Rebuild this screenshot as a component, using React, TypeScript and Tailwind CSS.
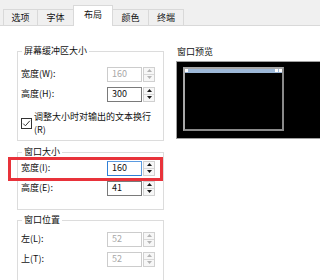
import clsx from "clsx";

const font = { fontFamily: '"Noto Sans CJK SC", "Noto Sans", sans-serif' };

function Spin({ disabled }: { disabled?: boolean }) {
  const c = disabled ? "#b4b4b4" : "#1a1a1a";
  return (
    <div className="ml-[1px] flex h-[15px] w-[12px] flex-col border border-[#d0d0d0] bg-[#f7f7f7]">
      <div className="flex flex-1 items-center justify-center border-b border-[#d8d8d8]">
        <svg width="5" height="3" viewBox="0 0 5 3">
          <path d="M0 3L2.5 0L5 3Z" fill={c} />
        </svg>
      </div>
      <div className="flex flex-1 items-center justify-center">
        <svg width="5" height="3" viewBox="0 0 5 3">
          <path d="M0 0L2.5 3L5 0Z" fill={c} />
        </svg>
      </div>
    </div>
  );
}

function NumRow({
  label,
  value,
  disabled,
  focused,
}: {
  label: string;
  value: string;
  disabled?: boolean;
  focused?: boolean;
}) {
  return (
    <div className="flex h-[20px] items-center">
      <span className="w-[86px]">{label}</span>
      <div
        className={clsx(
          "flex h-[15px] w-[35px] items-center border pl-[4px]",
          disabled && "border-[#cccccc] text-[#a8a8a8]",
          focused && "border-[#5b9be0] border-l-[#2f7fd6] border-b-[#2f7fd6]",
          !disabled && !focused && "border-[#7a7a7a]"
        )}
      >
        {value}
      </div>
      <Spin disabled={disabled} />
    </div>
  );
}

const tabs = [
  { name: "选项", w: "w-[35px]" },
  { name: "字体", w: "w-[37px]" },
  { name: "布局", w: "w-[40px]", active: true },
  { name: "颜色", w: "w-[37px]" },
  { name: "终端", w: "w-[36px]" },
];

export default function App() {
  return (
    <div
      className="relative h-[280px] w-[320px] overflow-hidden bg-white text-[9px] leading-[12px] text-[#111]"
      style={font}
    >
      <div className="flex h-[26px] items-end border-b border-[#d9d9d9] bg-[#f0f0f0] pl-[3px]">
        {tabs.map((t, i) => (
          <div
            key={t.name}
            className={clsx(
              "flex items-center justify-center border-l border-r border-t border-[#d9d9d9]",
              t.w,
              i > 0 && "-ml-px",
              t.active
                ? "relative z-10 -mb-px h-[21px] bg-white pb-[3px]"
                : "h-[16px] bg-[#f0f0f0]"
            )}
          >
            {t.name}
          </div>
        ))}
      </div>

      <div className="flex pl-[17px]">
        <div className="flex w-[147px] shrink-0 flex-col">
          <fieldset className="mt-[19px] border border-[#dcdcdc] px-[3px] pb-[4px] pt-[7px]">
            <legend className="ml-[1px] px-[2px] leading-[12px]">屏幕缓冲区大小</legend>
            <NumRow label="宽度(W):" value="160" disabled />
            <NumRow label="高度(H):" value="300" />
            <div className="mt-[6px] flex items-center">
              <div className="flex h-[11px] w-[11px] items-center justify-center border border-[#333]">
                <svg width="9" height="9" viewBox="0 0 9 9">
                  <path d="M1.2 4.6L3.4 6.8L7.8 1.8" fill="none" stroke="#333" strokeWidth="1" />
                </svg>
              </div>
              <div className="ml-[2px] leading-[13px]">
                调整大小时对输出的文本换行
                <br />
                (R)
              </div>
            </div>
          </fieldset>

          <fieldset className="mt-[5px] border border-[#dcdcdc] px-[3px] pb-[11px]">
            <legend className="ml-[1px] px-[2px] leading-[12px]">窗口大小</legend>
            <NumRow label="宽度(I):" value="160" focused />
            <NumRow label="高度(E):" value="41" />
          </fieldset>

          <fieldset className="mt-[4px] border border-[#dcdcdc] px-[3px] pb-[20px] pt-[3px]">
            <legend className="ml-[1px] px-[2px] leading-[12px]">窗口位置</legend>
            <NumRow label="左(L):" value="52" disabled />
            <NumRow label="上(T):" value="52" disabled />
          </fieldset>
        </div>

        <div className="ml-[12px] flex shrink-0 flex-col">
          <div className="mt-[20px] pl-[1px]">窗口预览</div>
          <div className="mt-[3px] h-[78px] w-[200px] border border-r-0 border-[#a0a0a0] bg-black pl-[6px] pt-[5px]">
            <div className="flex h-[64px] w-[101px] flex-col border-2 border-[#a8a8a8] border-b-[#8a8a8a] border-r-[#8a8a8a] bg-black">
              <div className="flex h-[4px] items-start justify-between bg-[#9db8d8]">
                <div className="h-[3px] w-[3px] bg-white" />
                <div className="flex gap-[1px]">
                  <div className="h-[3px] w-[3px] bg-white" />
                  <div className="h-[3px] w-[3px] bg-white" />
                </div>
              </div>
            </div>
          </div>
        </div>
      </div>

      <div className="absolute left-[8px] top-[157px] h-[24px] w-[155px] border-[3px] border-[#e8323a]" />
    </div>
  );
}
